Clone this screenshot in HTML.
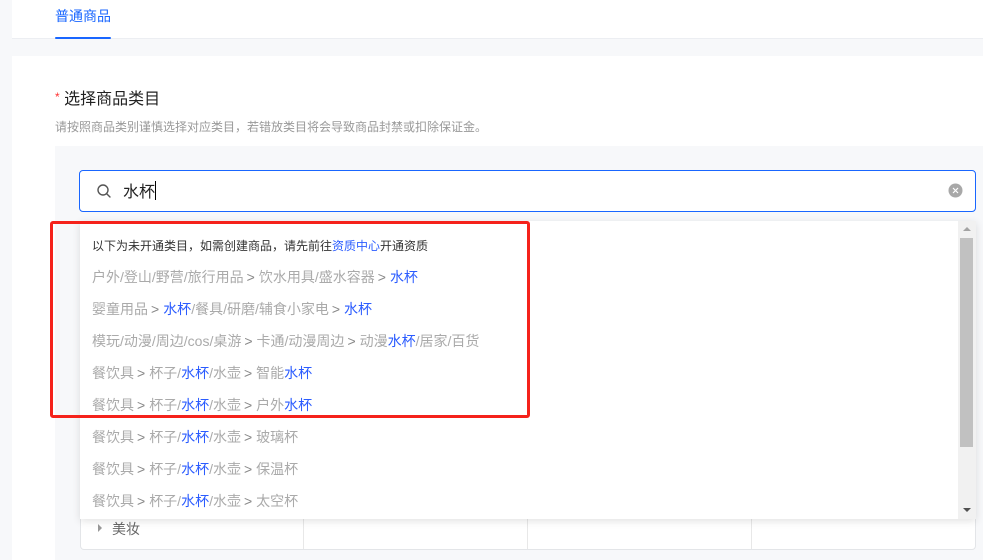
<!DOCTYPE html>
<html><head><meta charset="utf-8"><style>
*{margin:0;padding:0;box-sizing:border-box}
body{width:983px;height:560px;overflow:hidden;background:#f7f8fa;font-family:"Liberation Sans","Noto Sans CJK SC",sans-serif;position:relative}
.a{position:absolute}
.row{position:absolute;left:92px;font-size:14px;color:#aaa;white-space:nowrap;line-height:20px}
.row b{font-weight:normal;color:#2b5cff}
.row i{font-style:normal;color:#888;margin:0 4px 0 3px}
</style></head><body>
<div class="a" style="left:12px;top:0;width:971px;height:39px;background:#fff;border-bottom:1px solid #eceef2"></div>
<div class="a" style="left:55px;top:6px;font-size:14px;color:#1966ff;line-height:20px">普通商品</div>
<div class="a" style="left:55px;top:37px;width:56px;height:2px;background:#1966ff;border-radius:1px"></div>
<div class="a" style="left:12px;top:56px;width:971px;height:504px;background:#fff"></div>
<div class="a" style="left:55px;top:89px;font-size:16px;color:#222;line-height:22px"><span style="color:#f33;font-size:12px;position:relative;top:-3px">*</span> 选择商品类目</div>
<div class="a" style="left:55px;top:119px;font-size:12px;color:#999;line-height:17px">请按照商品类别谨慎选择对应类目，若错放类目将会导致商品封禁或扣除保证金。</div>
<div class="a" style="left:55px;top:146px;width:928px;height:414px;background:#f7f8fa"></div>
<div class="a" style="left:80px;top:518px;width:896px;height:32px;background:#fff;border:1px solid #e3e5e8;border-top:none;border-radius:0 0 4px 4px"></div>
<div class="a" style="left:303px;top:518px;width:1px;height:31px;background:#e8e8e8"></div>
<div class="a" style="left:527px;top:518px;width:1px;height:31px;background:#e8e8e8"></div>
<div class="a" style="left:751px;top:518px;width:1px;height:31px;background:#e8e8e8"></div>
<div class="a" style="left:98px;top:524px;width:0;height:0;border-left:4px solid #999;border-top:4px solid transparent;border-bottom:4px solid transparent"></div>
<div class="a" style="left:112px;top:519px;font-size:14px;color:#666;line-height:20px">美妆</div>
<div class="a" style="left:79px;top:170px;width:897px;height:42px;background:#fff;border:1px solid #1966ff;border-radius:4px"></div>
<svg class="a" style="left:96px;top:183px" width="16" height="16" viewBox="0 0 16 16"><circle cx="7" cy="7" r="5" fill="none" stroke="#555" stroke-width="1.4"/><path d="M10.7 10.7L14 14" stroke="#555" stroke-width="1.4" stroke-linecap="round"/></svg>
<div class="a" style="left:123px;top:181px;font-size:16px;color:#222;line-height:22px">水杯<span style="display:inline-block;width:1px;height:19px;background:#000;vertical-align:-3px"></span></div>
<svg class="a" style="left:948px;top:183px" width="15" height="15" viewBox="0 0 15 15"><circle cx="7.5" cy="7.5" r="7" fill="#a8a8a8"/><path d="M5 5L10 10M10 5L5 10" stroke="#fff" stroke-width="1.2"/></svg>
<div class="a" style="left:80px;top:221px;width:896px;height:298px;background:#fff;box-shadow:0 2px 8px rgba(0,0,0,.12)"></div>
<div class="a" style="left:958px;top:221px;width:18px;height:298px;background:#f1f1f1"></div>
<div class="a" style="left:960px;top:238px;width:13px;height:209px;background:#c1c1c1"></div>
<div class="a" style="left:963px;top:227px;width:0;height:0;border-bottom:4px solid #a3a3a3;border-left:4px solid transparent;border-right:4px solid transparent"></div>
<div class="a" style="left:963px;top:508px;width:0;height:0;border-top:4px solid #505050;border-left:4px solid transparent;border-right:4px solid transparent"></div>
<div class="row" style="top:236px;color:#333;font-size:12px">以下为未开通类目，如需创建商品，请先前往<b>资质中心</b>开通资质</div>
<div class="row" style="top:267px">户外/登山/野营/旅行用品<i>&gt;</i>饮水用具/盛水容器<i>&gt;</i><b>水杯</b></div>
<div class="row" style="top:299px">婴童用品<i>&gt;</i><b>水杯</b>/餐具/研磨/辅食小家电<i>&gt;</i><b>水杯</b></div>
<div class="row" style="top:331px">模玩/动漫/周边/cos/桌游<i>&gt;</i>卡通/动漫周边<i>&gt;</i>动漫<b>水杯</b>/居家/百货</div>
<div class="row" style="top:363px">餐饮具<i>&gt;</i>杯子/<b>水杯</b>/水壶<i>&gt;</i>智能<b>水杯</b></div>
<div class="row" style="top:395px">餐饮具<i>&gt;</i>杯子/<b>水杯</b>/水壶<i>&gt;</i>户外<b>水杯</b></div>
<div class="row" style="top:427px">餐饮具<i>&gt;</i>杯子/<b>水杯</b>/水壶<i>&gt;</i>玻璃杯</div>
<div class="row" style="top:459px">餐饮具<i>&gt;</i>杯子/<b>水杯</b>/水壶<i>&gt;</i>保温杯</div>
<div class="row" style="top:491px">餐饮具<i>&gt;</i>杯子/<b>水杯</b>/水壶<i>&gt;</i>太空杯</div>
<div class="a" style="left:50px;top:221px;width:480px;height:197px;border:3px solid #f5221b;border-radius:3px"></div>
</body></html>
